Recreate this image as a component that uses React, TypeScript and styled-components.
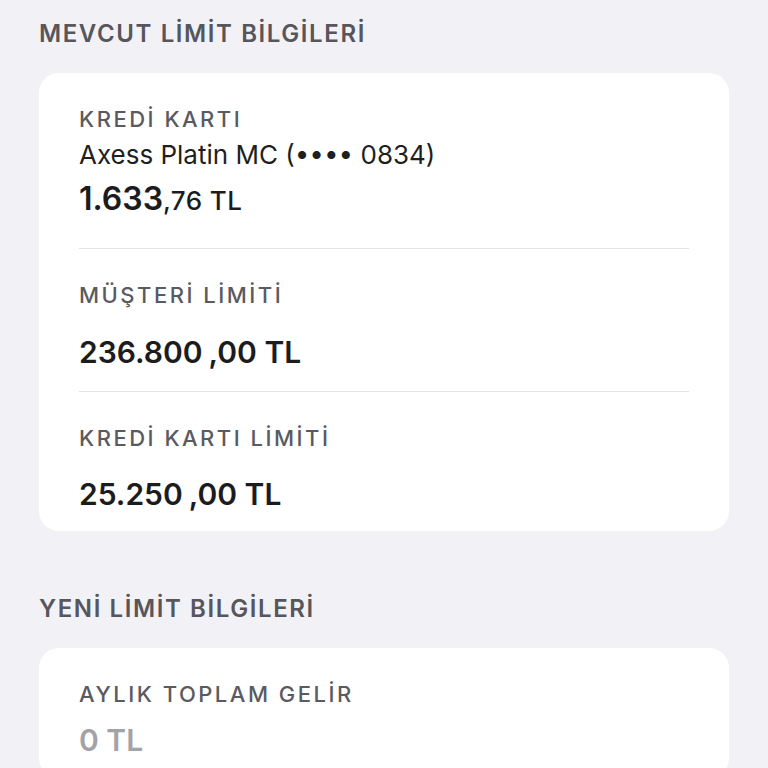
import React from "react";
import styled, { createGlobalStyle } from "styled-components";

const GlobalStyle = createGlobalStyle`
  body {
    margin: 0;
    background: #f2f2f6;
    font-family: Inter, "Open Sans", sans-serif;
  }
`;

const Page = styled.div`
  padding: 19px 39px 0 39px;
  display: flex;
  flex-direction: column;
`;

const SectionTitle = styled.h2`
  margin: 0 0 24px 0;
  font-size: 24px;
  line-height: 30px;
  font-weight: 600;
  letter-spacing: 1.6px;
  color: #56565c;
`;

const Card = styled.div<{ $last?: boolean }>`
  background: #ffffff;
  border-radius: 20px;
  padding: 0 40px;
  margin-bottom: ${(p) => (p.$last ? "0" : "63px")};
`;

const Row = styled.div<{ $divider?: boolean; $bottom?: number }>`
  padding: 33px 0 ${(p) => p.$bottom ?? 20}px 0;
  border-bottom: ${(p) => (p.$divider ? "1.5px solid #e2e2e7" : "none")};
  display: flex;
  flex-direction: column;
`;

const Label = styled.div`
  font-size: 22px;
  line-height: 26px;
  font-weight: 500;
  letter-spacing: 2.5px;
  color: #5a5a60;
`;

const SubText = styled.div`
  margin-top: 7px;
  font-size: 26px;
  line-height: 32px;
  color: #1f1f22;
`;

const Amount = styled.div<{ $muted?: boolean; $gap?: number }>`
  margin-top: ${(p) => p.$gap ?? 10}px;
  font-size: 30px;
  line-height: 36px;
  font-weight: 600;
  color: ${(p) => (p.$muted ? "#a2a2a7" : "#1c1c1f")};
`;

const Big = styled.span`
  font-size: 32px;
`;

const Decimals = styled.span<{ $spaced?: boolean }>`
  margin-left: ${(p) => (p.$spaced ? "6px" : "0")};
  font-size: ${(p) => (p.$spaced ? "30px" : "26px")};
  font-weight: ${(p) => (p.$spaced ? 600 : 500)};
  letter-spacing: ${(p) => (p.$spaced ? "0" : "0.4px")};
`;

const App: React.FC = () => {
  return (
    <>
      <GlobalStyle />
      <Page>
        <SectionTitle>MEVCUT LİMİT BİLGİLERİ</SectionTitle>
        <Card>
          <Row $divider $bottom={29}>
            <Label>KREDİ KARTI</Label>
            <SubText>Axess Platin MC (•••• 0834)</SubText>
            <Amount $gap={10}>
              <Big>1.633</Big>
              <Decimals>,76 TL</Decimals>
            </Amount>
          </Row>
          <Row $divider $bottom={21}>
            <Label>MÜŞTERİ LİMİTİ</Label>
            <Amount $gap={26}>
              236.800<Decimals $spaced>,00 TL</Decimals>
            </Amount>
          </Row>
          <Row $bottom={19}>
            <Label>KREDİ KARTI LİMİTİ</Label>
            <Amount $gap={25}>
              25.250<Decimals $spaced>,00 TL</Decimals>
            </Amount>
          </Row>
        </Card>
        <SectionTitle>YENİ LİMİT BİLGİLERİ</SectionTitle>
        <Card $last>
          <Row>
            <Label>AYLIK TOPLAM GELİR</Label>
            <Amount $muted $gap={15}>0 TL</Amount>
          </Row>
        </Card>
      </Page>
    </>
  );
};

export default App;
